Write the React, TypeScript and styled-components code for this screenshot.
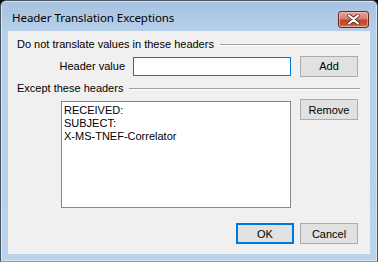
import styled, { createGlobalStyle } from "styled-components";

const GlobalStyle = createGlobalStyle`
  html, body {
    margin: 0;
    padding: 0;
    background: #000;
  }
  #root {
    width: 378px;
    height: 262px;
  }
`;

const headers = ["RECEIVED:", "SUBJECT:", "X-MS-TNEF-Correlator"];

const CloseGlyph = () => (
  <svg width="15" height="11" viewBox="0 0 15 11">
    <path
      d="M3 1.5 L7.5 5 L12 1.5 M3 9.5 L7.5 6 L12 9.5"
      fill="none"
      stroke="#5a2a22"
      strokeWidth="3.6"
      strokeLinecap="round"
    />
    <path
      d="M3 1.5 L7.5 5 L12 1.5 M3 9.5 L7.5 6 L12 9.5"
      fill="none"
      stroke="#fff"
      strokeWidth="2.2"
      strokeLinecap="round"
    />
  </svg>
);

const App = () => {
  return (
    <>
      <GlobalStyle />
      <Window>
        <TitleBar>
          <Title>Header Translation Exceptions</Title>
          <CloseButton><CloseGlyph /></CloseButton>
        </TitleBar>
        <Client>
          <GroupHeader>
            <span>Do not translate values in these headers</span>
            <Rule />
          </GroupHeader>
          <ValueRow>
            <FieldLabel>Header value</FieldLabel>
            <TextInput />
            <Button>Add</Button>
          </ValueRow>
          <GroupHeader>
            <span>Except these headers</span>
            <Rule />
          </GroupHeader>
          <ListRow>
            <ListBox>
              {headers.map((h) => (
                <ListItem key={h}>{h}</ListItem>
              ))}
            </ListBox>
            <Button>Remove</Button>
          </ListRow>
          <Footer>
            <Button $default>OK</Button>
            <Button>Cancel</Button>
          </Footer>
        </Client>
      </Window>
    </>
  );
};

export default App;

const Window = styled.div`
  width: 378px;
  height: 262px;
  box-sizing: border-box;
  display: flex;
  flex-direction: column;
  border: 1px solid #4a5663;
  border-bottom-color: #2bc0d8;
  border-radius: 6px 6px 0 0;
  background: linear-gradient(to bottom, #a6c2df 0px, #b7cfe8 30px, #bad2ea 100%);
  box-shadow: inset 0 0 0 1px #d7e5f3;
  padding: 0 7px 7px 7px;
  font-family: "Liberation Sans", Arial, sans-serif;
`;

const TitleBar = styled.div`
  height: 30px;
  display: flex;
  align-items: center;
  justify-content: space-between;
  padding: 0 1px 0 4px;
`;

const Title = styled.div`
  font-family: "Noto Sans", "Open Sans", sans-serif;
  font-size: 11.5px;
  color: #000;
  margin-top: 3px;
  letter-spacing: -0.05px;
`;

const CloseButton = styled.div`
  width: 31px;
  height: 17px;
  box-sizing: border-box;
  margin-top: 6px;
  border: 1px solid #6b2a1f;
  border-radius: 3px;
  background: linear-gradient(to bottom, #e6a597 0%, #d3806c 45%, #c0452d 55%, #c8553a 85%, #d98a6f 100%);
  box-shadow: inset 0 0 0 1px rgba(255, 210, 200, 0.5);
  display: flex;
  align-items: center;
  justify-content: center;
`;

const Client = styled.div`
  flex: 1;
  background: #f0f0f0;
  display: flex;
  flex-direction: column;
  padding: 7px 9px 0 9px;
  font-size: 11px;
  color: #000;
`;

const GroupHeader = styled.div`
  display: flex;
  align-items: center;
  gap: 6px;
  height: 13px;
  line-height: 13px;
  padding-right: 1px;
`;

const Rule = styled.div`
  flex: 1;
  height: 0;
  border-top: 1px solid #a0a0a0;
  border-bottom: 1px solid #fff;
`;

const ValueRow = styled.div`
  display: flex;
  align-items: center;
  margin-top: 5px;
  margin-bottom: 6px;
  height: 20px;
`;

const FieldLabel = styled.label`
  width: 108px;
  text-align: right;
  margin-right: 8px;
`;

const TextInput = styled.input`
  width: 158px;
  height: 19px;
  box-sizing: border-box;
  border: 1px solid #0078d7;
  background: #fff;
  outline: none;
  margin: 0 9px 0 0;
  padding: 0 3px;
  font: inherit;
`;

const Button = styled.button<{ $default?: boolean }>`
  width: 58px;
  height: 21px;
  box-sizing: border-box;
  border: ${(p) => (p.$default ? "2px solid #0078d7" : "1px solid #adadad")};
  background: #e1e1e1;
  font-family: "Liberation Sans", Arial, sans-serif;
  font-size: 11px;
  color: #000;
  padding: 0;
  margin: 0;
`;

const ListRow = styled.div`
  display: flex;
  align-items: flex-start;
  margin-top: 4px;
  padding-left: 44px;
`;

const ListBox = styled.div`
  width: 230px;
  height: 107px;
  box-sizing: border-box;
  margin: 2px 9px 0 0;
  border: 1px solid #828790;
  background: #fff;
  padding: 2px 2px;
`;

const ListItem = styled.div`
  line-height: 13px;
  height: 13px;
`;

const Footer = styled.div`
  display: flex;
  justify-content: flex-end;
  gap: 6px;
  margin-top: 15px;
  padding-right: 3px;
`;
